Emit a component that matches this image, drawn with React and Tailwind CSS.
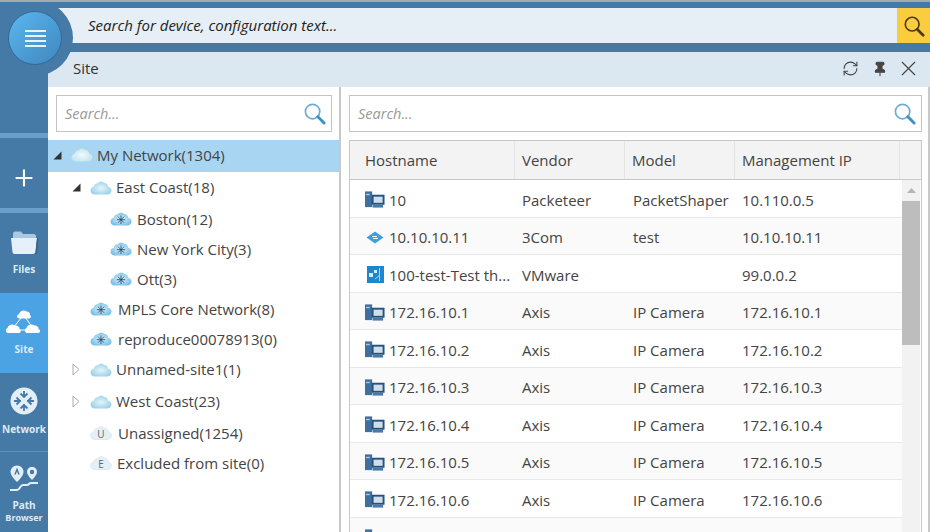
import React from "react";
import { Plus, RefreshCw, X, Pin } from "lucide-react";

const SearchIcon = ({ color = "#6aaed8", handle = "#3d8fc4", size = 23 }) => (
  <svg width={size} height={size} viewBox="0 0 24 24" fill="none">
    <circle cx="10" cy="10" r="7.500" stroke={color} strokeWidth="1.800" />
    <path d="M15.500 15.500L22 22" stroke={handle} strokeWidth="3" strokeLinecap="round" />
  </svg>
);

const cloudPath =
  "M5 14.500C2 14.500 .5 12.500 .5 10.500C.5 8.500 2 7.200 3.500 7C4 4.500 6 3 8 3.200C9.200 1.500 12.500 1.200 14.200 3C16.500 3 18 4.700 18.300 6.700C20.200 7.200 21.500 8.700 21.500 10.500C21.500 12.700 19.800 14.500 17 14.500Z";

const CloudDefs = () => (
  <svg width="0" height="0" className="absolute">
    <defs>
      <radialGradient id="cloudPlain" cx="50%" cy="50%" r="60%">
        <stop offset="0%" stopColor="#e6f5f9" />
        <stop offset="100%" stopColor="#93cfe8" />
      </radialGradient>
      <radialGradient id="cloudPale" cx="50%" cy="50%" r="60%">
        <stop offset="0%" stopColor="#f0f9fb" />
        <stop offset="100%" stopColor="#bfe3ee" />
      </radialGradient>
      <radialGradient id="cloudStar" cx="50%" cy="50%" r="60%">
        <stop offset="0%" stopColor="#e4f4fb" />
        <stop offset="100%" stopColor="#6cb9e6" />
      </radialGradient>
    </defs>
  </svg>
);

const Cloud = ({ kind }) => (
  <svg width="22" height="16" viewBox="0 0 22 16">
    <path
      d={cloudPath}
      fill={kind === "star" ? "url(#cloudStar)" : kind === "pale" ? "url(#cloudPale)" : "url(#cloudPlain)"}
    />
    {kind === "star" && (
      <path d="M11 4.500V13M6.800 8.700H15.200M8 5.700L14 11.700M14 5.700L8 11.700" stroke="#1f4f6e" strokeWidth=".9" />
    )}
  </svg>
);

const LetterCloud = ({ letter }) => (
  <svg width="22" height="16" viewBox="0 0 22 16">
    <path d={cloudPath} fill="#e4f0f6" stroke="#cfe2ec" strokeWidth=".6" />
    <text x="11" y="13" textAnchor="middle" fontSize="10" fontFamily="'Open Sans', sans-serif" fill="#666">
      {letter}
    </text>
  </svg>
);

const ServerIcon = () => (
  <svg width="21" height="17" viewBox="0 0 21 17">
    <rect x="0" y="0" width="7.500" height="16.500" fill="#3f6f9e" />
    <rect x="1" y="2.500" width="4" height="1.500" fill="#a8c6de" />
    <rect x="7" y="3.500" width="13.500" height="10.500" fill="#25527c" />
    <rect x="9" y="5.500" width="9.500" height="6.500" fill="#cfdeeb" />
    <rect x="8" y="14" width="11" height="3" fill="#4a7aa4" />
  </svg>
);

const SwitchIcon = () => (
  <svg width="18" height="13" viewBox="0 0 18 13">
    <path d="M9 0.500L17.500 6.500L9 12.500L0.500 6.500Z" fill="#3f9fdc" />
    <path d="M6 5.500H11M7 7.500H12" stroke="#fff" strokeWidth="1" />
  </svg>
);

const VmIcon = () => (
  <svg width="17" height="17" viewBox="0 0 17 17">
    <rect width="17" height="17" fill="#1c86cf" />
    <rect x="2" y="7" width="4" height="4" fill="#d5ecfa" />
    <rect x="7" y="4" width="3" height="3" fill="#d5ecfa" />
    <path d="M12.500 2V15M8 13L13 9" stroke="#a8d8f4" strokeWidth="1" />
  </svg>
);

const NavItem = ({ label, sub, active, children, className = "" }) => (
  <div
    className={`flex flex-col items-center text-[#dfeaf3] h-[80px] font-bold text-[10px] leading-[13px] ${
      active ? "bg-[#4ba3e3]" : ""
    } ${className}`}
  >
    {children}
    <span>{label}</span>
    {sub && <span className="text-[9px] leading-[11px]">{sub}</span>}
  </div>
);

const tree = [
  { name: "My Network(1304)", caret: "open", pad: 5, icon: "pale", gap: 4, selected: true, h: "h-[32px]" },
  { name: "East Coast(18)", caret: "open", pad: 24, icon: "plain", gap: 4, h: "h-[33px]" },
  { name: "Boston(12)", pad: 62, icon: "star", gap: 5, h: "h-[30px]" },
  { name: "New York City(3)", pad: 62, icon: "star", gap: 5, h: "h-[30px]" },
  { name: "Ott(3)", pad: 62, icon: "star", gap: 5, h: "h-[30px]" },
  { name: "MPLS Core Network(8)", pad: 42, icon: "star", gap: 6, h: "h-[30px]" },
  { name: "reproduce00078913(0)", pad: 42, icon: "star", gap: 6, h: "h-[30px]" },
  { name: "Unnamed-site1(1)", caret: "closed", pad: 24, icon: "plain", gap: 4, h: "h-[31px]" },
  { name: "West Coast(23)", caret: "closed", pad: 24, icon: "plain", gap: 4, h: "h-[33px]" },
  { name: "Unassigned(1254)", pad: 42, letter: "U", gap: 6, h: "h-[30px]" },
  { name: "Excluded from site(0)", pad: 42, letter: "E", gap: 5, h: "h-[30px]" },
];

const rows = [
  ["10", "Packeteer", "PacketShaper", "10.110.0.5", "server"],
  ["10.10.10.11", "3Com", "test", "10.10.10.11", "switch"],
  ["100-test-Test th...", "VMware", "", "99.0.0.2", "vm"],
  ["172.16.10.1", "Axis", "IP Camera", "172.16.10.1", "server"],
  ["172.16.10.2", "Axis", "IP Camera", "172.16.10.2", "server"],
  ["172.16.10.3", "Axis", "IP Camera", "172.16.10.3", "server"],
  ["172.16.10.4", "Axis", "IP Camera", "172.16.10.4", "server"],
  ["172.16.10.5", "Axis", "IP Camera", "172.16.10.5", "server"],
  ["172.16.10.6", "Axis", "IP Camera", "172.16.10.6", "server"],
  ["", "", "", "", "server"],
];

const SearchBox = ({ className = "" }) => (
  <div className={`h-[37px] border border-[#c4c4c4] flex items-center justify-between pl-[8px] pr-[5px] bg-white ${className}`}>
    <span className="italic text-[14.500px] text-[#999]">Search...</span>
    <SearchIcon />
  </div>
);

const App = () => {
  return (
    <div className="relative w-[930px] h-[532px] overflow-hidden flex bg-[#4579a6] border-t-2 border-[#a9a9a9] font-['Open_Sans',sans-serif] text-[15px] text-[#444]">
      <CloudDefs />
      <div className="w-[48px] shrink-0 flex flex-col">
        <div className="h-[131px] shrink-0" />
        <div className="h-[5px] shrink-0 bg-[#6a9fcb]" />
        <div className="h-[70px] shrink-0 flex items-center justify-center text-white pt-[10px]">
          <Plus size={26} strokeWidth={2} />
        </div>
        <div className="h-[5px] shrink-0 bg-[#6a9fcb]" />
        <NavItem label="Files" className="pt-[17px]">
          <svg width="29" height="26" viewBox="0 0 29 26" className="mb-[7px]">
            <path d="M3 4C3 2.500 4 1.500 5 1.500H11L13 4H24C25 4 26 5 26 6V9H3Z" fill="#a9c9e2" />
            <path d="M1 8H27L25.500 22C25.400 23 24.500 24 23.500 24H4.500C3.500 24 2.600 23 2.500 22Z" fill="#e6f0f8" />
            <path d="M27 8H28.500L27 24H23.500C24.500 24 25.400 23 25.500 22Z" fill="#36648c" />
          </svg>
        </NavItem>
        <NavItem label="Site" active className="pt-[15px]">
          <svg width="38" height="30" viewBox="0 0 38 30" fill="#fff" className="mb-[5px]">
            <path d="M18.500 7L8 20M18.500 7L28 20M8 22H28" stroke="#fff" strokeWidth="1" />
            <path d="M13 10C11.500 9 12 6.500 14 6.300C14.500 3 19 1.500 21.500 3.500C24 3.500 25.500 5.500 25 7C26.500 8 26 10.500 24 10.500H14Z" />
            <path d="M3 25C.5 24.500 0 21 2.500 20C3 16.500 8 15.500 10.500 17.500C13 17.500 15 19.500 14.500 21C16.500 22 16 25 14 25Z" />
            <path d="M22 25C19.500 24.500 19 21 21.500 20C22 16.500 27 15.500 29.500 17.500C32 17.500 34 19.500 33.500 21C36 22 35.500 25 33 25Z" />
          </svg>
        </NavItem>
        <NavItem label="Network" className="border-b border-[#5f8fb8] pt-[13px]">
          <svg width="28" height="30" viewBox="0 0 28 30" className="mb-[7px]">
            <circle cx="14" cy="15" r="13.500" fill="#e3eff8" />
            <path
              d="M14 5V12M10.500 7.500L14 11L17.500 7.500M14 25V18M10.500 22.500L14 19L17.500 22.500M4 15H11M6.500 11.500L10 15L6.500 18.500M24 15H17M21.500 11.500L18 15L21.500 18.500"
              fill="none"
              stroke="#4579a6"
              strokeWidth="1.800"
            />
          </svg>
        </NavItem>
        <NavItem label="Path" sub="Browser" className="pt-[13px]">
          <svg width="32" height="28" viewBox="0 0 32 28" fill="none" className="mb-[6px]">
            <path d="M9 0.500C5 0.500 2.500 3.500 2.500 7C2.500 11 9 17 9 17C9 17 15.500 11 15.500 7C15.500 3.500 13 0.500 9 0.500Z" fill="#e3eff8" />
            <path d="M24 2C21 2 19 4 19 7C19 10 24 15 24 15C24 15 29 10 29 7C29 4 27 2 24 2Z" fill="#e3eff8" />
            <circle cx="24" cy="7" r="2.200" fill="#4579a6" />
            <path d="M7 9.500L9 4.500L11 9.500" stroke="#4579a6" strokeWidth="1.500" />
            <path d="M2 25H9C12 25 12 20 15 20H19C21 20 21 18 23 18H30" stroke="#e3eff8" strokeWidth="2" />
          </svg>
        </NavItem>
      </div>

      <div className="flex-1 min-w-0 flex flex-col">
        <div className="h-[35px] mt-[6px] shrink-0 flex items-center bg-[#e6eef6]">
          <span className="flex-1 pl-[40px] italic text-[15px] text-[#222]">Search for device, configuration text...</span>
          <div className="w-[33px] h-full bg-[#fccc3f] flex items-center justify-center">
            <SearchIcon color="#4a3b12" handle="#4a3b12" size={22} />
          </div>
        </div>
        <div className="h-[35px] mt-[9px] shrink-0 flex items-center justify-between bg-[#dbe8f2] pl-[25px] pr-[9px] pb-[2px]">
          <span className="text-[#333]">Site</span>
          <div className="flex items-center gap-[13px] text-[#444]">
            <RefreshCw size={17} strokeWidth={1.500} />
            <Pin size={16} strokeWidth={1.600} fill="#444" />
            <X size={25} strokeWidth={1.100} className="-ml-[5px]" />
          </div>
        </div>

        <div className="flex-1 min-h-0 flex bg-white border-r-2 border-[#c8c8c8]">
          <div className="w-[293px] shrink-0 border-r-2 border-[#c8c8c8]">
            <SearchBox className="mx-[8px] mt-[8px] w-[276px]" />
            <div className="mt-[8px]">
              {tree.map((item) => (
                <div
                  key={item.name}
                  className={`${item.h} flex items-center pb-[2px] ${item.selected ? "bg-[#a8d5f2]" : ""}`}
                  style={{ paddingLeft: item.pad }}
                >
                  {item.caret === "open" && (
                    <svg width="9" height="9" viewBox="0 0 9 9" className="mr-[9px]">
                      <path d="M8.500 0.500V8.500H0.500Z" fill="#333" />
                    </svg>
                  )}
                  {item.caret === "closed" && (
                    <svg width="8" height="13" viewBox="0 0 8 13" className="mr-[10px]">
                      <path d="M1 1L7 6.500L1 12Z" fill="#fff" stroke="#aaa" />
                    </svg>
                  )}
                  {item.letter ? <LetterCloud letter={item.letter} /> : <Cloud kind={item.icon} />}
                  <span className="whitespace-nowrap" style={{ marginLeft: item.gap }}>
                    {item.name}
                  </span>
                </div>
              ))}
            </div>
          </div>

          <div className="flex-1 min-w-0 pl-[8px] pr-[6px]">
            <SearchBox className="mt-[8px]" />
            <div className="mt-[8px] border border-[#c8c8c8] border-b-0 h-[400px] overflow-hidden">
              <div className="h-[39px] flex items-stretch bg-[#f3f3f3] border-b border-[#c8c8c8]">
                <div className="w-[165px] pl-[15px] flex items-center border-r border-[#e4e4e4]">Hostname</div>
                <div className="w-[110px] pl-[7px] flex items-center border-r border-[#e4e4e4]">Vendor</div>
                <div className="w-[110px] pl-[7px] flex items-center border-r border-[#e4e4e4]">Model</div>
                <div className="w-[165px] pl-[7px] flex items-center border-r border-[#e4e4e4]">Management IP</div>
                <div className="flex-1" />
              </div>
              <div className="flex">
                <div className="w-[552px] shrink-0">
                  {rows.map((row, i) => (
                    <div
                      key={i}
                      className={`h-[37.500px] pt-[3px] flex items-center border-b border-[#e8e8e8] ${i % 2 === 0 ? "bg-white" : "bg-[#fafafa]"}`}
                    >
                      <div className="w-[165px] pl-[15px] flex items-center gap-[4px] whitespace-nowrap">
                        <span className="w-[20px] shrink-0 flex justify-center">
                          {row[4] === "server" && <ServerIcon />}
                          {row[4] === "switch" && <SwitchIcon />}
                          {row[4] === "vm" && <VmIcon />}
                        </span>
                        {row[0]}
                      </div>
                      <div className="w-[110px] pl-[7px]">{row[1]}</div>
                      <div className="w-[110px] pl-[8px] whitespace-nowrap">{row[2]}</div>
                      <div className="w-[165px] pl-[7px]">{row[3]}</div>
                    </div>
                  ))}
                </div>
                <div className="w-[18px] shrink-0 bg-[#f2f2f2] flex flex-col items-center">
                  <div className="h-[21px] shrink-0 flex items-center justify-center">
                    <svg width="9" height="5" viewBox="0 0 9 5">
                      <path d="M4.500 0L9 5H0Z" fill="#b5b5b5" />
                    </svg>
                  </div>
                  <div className="w-full h-[144px] bg-[#bdbdbd]" />
                </div>
              </div>
            </div>
          </div>
        </div>
      </div>

      <div className="absolute left-[-3px] top-[-2px] w-[76px] h-[76px] rounded-full bg-[#4579a6] flex items-center justify-center">
        <div className="w-[54px] h-[54px] rounded-full bg-gradient-to-br from-[#5bb8f0] to-[#3f86bd] border border-[#33689a] flex flex-col items-center justify-center gap-[3px]">
          <span className="w-[21px] h-[2px] bg-[#e8f3fb]" />
          <span className="w-[21px] h-[2px] bg-[#e8f3fb]" />
          <span className="w-[21px] h-[2px] bg-[#e8f3fb]" />
          <span className="w-[21px] h-[2px] bg-[#e8f3fb]" />
        </div>
      </div>
    </div>
  );
};

export default App;
